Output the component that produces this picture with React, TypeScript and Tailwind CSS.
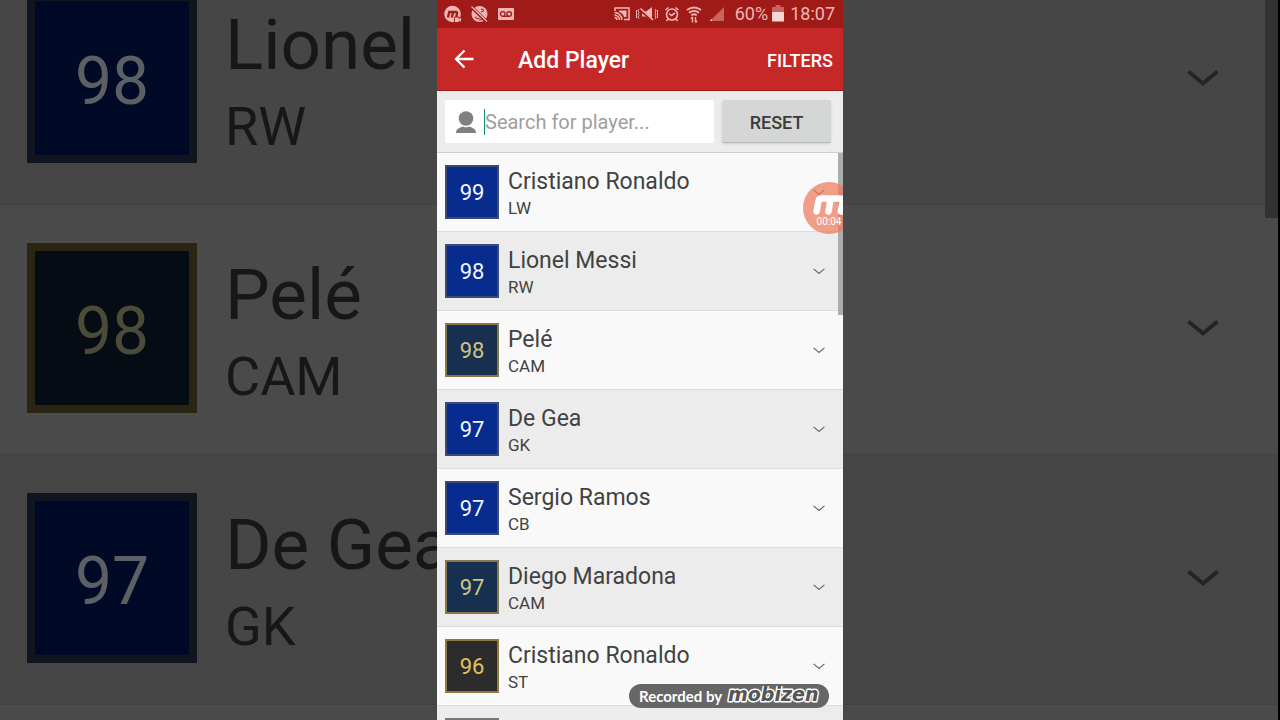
import clsx from "clsx";

type Tier = "blue" | "navy" | "black";

type Player = {
  id: number;
  name: string;
  position: string;
  rating: number;
  tier: Tier;
};

const PLAYERS: Player[] = [
  { id: 1, name: "Cristiano Ronaldo", position: "LW", rating: 99, tier: "blue" },
  { id: 2, name: "Lionel Messi", position: "RW", rating: 98, tier: "blue" },
  { id: 3, name: "Pelé", position: "CAM", rating: 98, tier: "navy" },
  { id: 4, name: "De Gea", position: "GK", rating: 97, tier: "blue" },
  { id: 5, name: "Sergio Ramos", position: "CB", rating: 97, tier: "blue" },
  { id: 6, name: "Diego Maradona", position: "CAM", rating: 97, tier: "navy" },
  { id: 7, name: "Cristiano Ronaldo", position: "ST", rating: 96, tier: "black" },
];

const TIER_STYLES: Record<Tier, string> = {
  blue: "bg-[#082c8e] border-[#3d4a75] text-[#f0f4ff]",
  navy: "bg-[#17304f] border-[#85794a] text-[#cfc489]",
  black: "bg-[#2c2c2c] border-[#8f7a3c] text-[#e0c15c]",
};

const DIM_TIER_STYLES: Record<Tier, string> = {
  blue: "bg-[#000a26] border-[#11151f] text-[#5c6065]",
  navy: "bg-[#050c14] border-[#2a2412] text-[#4c4a38]",
  black: "bg-[#0a0a0a] border-[#2a2412] text-[#4c4a38]",
};

function Chevron({ className }: { className: string }) {
  return (
    <svg viewBox="0 0 32 18" fill="none" stroke="currentColor" className={className}>
      <path d="M1.500 2.500 16 14.500 30.500 2.500" />
    </svg>
  );
}

function Backdrop() {
  return (
    <div aria-hidden="true" className="absolute inset-0 overflow-hidden bg-black pr-0.5">
      <div className="relative -mt-[45px]">
        {PLAYERS.slice(1, 4).map((p, i) => (
          <div
            key={p.id}
            className={clsx(
              "flex h-[250px] items-center border-b border-[#424242] pr-[59px] pb-1 pl-[27px]",
              i % 2 === 0 ? "bg-[#464646]" : "bg-[#4a4a4a]",
            )}
          >
            <div className={clsx("flex size-[170px] shrink-0 items-center justify-center border-8 pt-2 text-[66px]", DIM_TIER_STYLES[p.tier])}>
              {p.rating}
            </div>
            <div className="ml-7 w-[212px] overflow-hidden pt-2.5 whitespace-nowrap text-[#171717]">
              <p className="text-[71px] leading-[88px]">{p.name}</p>
              <p className="text-[54px] leading-[76px]">{p.position}</p>
            </div>
            <Chevron className="ml-auto w-8 stroke-4 text-[#242424]" />
          </div>
        ))}
        <div className="h-[250px] bg-[#4a4a4a]" />
        <div className="absolute top-0 right-0 h-[263px] w-[13px] bg-[#323232]" />
      </div>
    </div>
  );
}

function StatusBar() {
  return (
    <div className="flex h-7 items-center bg-[#a01a18] pr-2 pl-[7px] text-[#efb5b3]">
      <div className="flex flex-1 items-center gap-2">
        {/* Recorder */}
        <svg viewBox="0 0 18 18" className="size-[18px]">
          <circle cx="8.500" cy="9" r="8.300" fill="currentColor" />
          <path d="m4 12.500 1.200-5.500h6.800q1.500 0 1 1.500l-.8 3.500M7.800 12.500l1.200-5" fill="none" stroke="#a01a18" strokeWidth="2.300" />
          <path d="M10.500 12h4.500v1.500l2.500-1.500v5.500L15 16v1.500h-4.500z" fill="currentColor" stroke="#a01a18" strokeWidth=".9" />
        </svg>
        {/* Call blocked */}
        <svg viewBox="0 0 18 18" className="size-[18px]">
          <circle cx="9.500" cy="9" r="8" fill="currentColor" />
          <path d="M11 4q3 0 2.500 2l-2.500 1M6 11.500q-1 2 1 2.500l2.500-1M9 15q3 .5 5-2.500" fill="none" stroke="#a01a18" strokeWidth="1" />
          <path d="M2 3.500 16 17" stroke="#a01a18" strokeWidth="1.800" />
          <path d="M1.500 1.500 17 16.500" stroke="currentColor" strokeWidth="1.200" />
          <path d="M3 1.500 17.500 15.500" stroke="#a01a18" strokeWidth=".8" />
        </svg>
        {/* Voicemail */}
        <svg viewBox="0 0 18 18" className="ml-px size-[18px]">
          <rect x="1" y="3" width="16" height="12" rx="1" fill="currentColor" />
          <g fill="none" stroke="#a01a18" strokeWidth="1.300">
            <circle cx="5.800" cy="9" r="2.300" />
            <circle cx="12.200" cy="9" r="2.300" />
            <path d="M5.800 11.300h6.400" />
          </g>
        </svg>
      </div>
      <div className="flex items-center gap-1">
        {/* Cast */}
        <svg viewBox="0 0 18 18" fill="none" stroke="currentColor" strokeWidth="1.500" className="size-[18px]">
          <path d="M2 6V3h14v11.500h-5" />
          <path d="M6 5.500h7.500V12h-2.500q-1-4-5-5z" fill="currentColor" stroke="none" />
          <path d="M1.500 7.500a7.500 7.500 0 0 1 7.500 7.500M1.500 10a5 5 0 0 1 5 5M1.500 12.500A2.500 2.500 0 0 1 4 15" />
        </svg>
        {/* Vibrate, sound off */}
        <svg viewBox="0 0 24 18" className="h-[18px] w-6">
          <path d="M7 6.500h4L17 2v14l-6-4.500H7z" fill="currentColor" />
          <path d="m5.500 5 12 10.500" stroke="#a01a18" strokeWidth="2.800" />
          <path d="M5.500 3.500 18 15" stroke="currentColor" strokeWidth="1.600" />
          <path d="m4 4-1 1.700 1 1.600-1 1.700 1 1.700-1 1.600L4 14M1.500 5v8M20 4l1 1.700-1 1.600 1 1.700-1 1.700 1 1.600L20 14M22.500 5v8" fill="none" stroke="currentColor" strokeWidth="1" />
        </svg>
        {/* Alarm */}
        <svg viewBox="0 0 18 18" fill="none" stroke="currentColor" strokeWidth="1.600" className="size-[18px]">
          <circle cx="9" cy="9.500" r="5.500" />
          <path d="M2.500 5 5.500 2.500M15.500 5l-3-2.500M5 14l-1.500 2M13 14l1.500 2M6 8.500l2.500 2 3.500-2.500" />
        </svg>
        {/* Wi-Fi */}
        <svg viewBox="0 0 18 18" fill="none" stroke="currentColor" strokeWidth="1.900" className="size-[18px]">
          <path d="M2 5q7-5 14 0M4 7.700q5-3.700 10 0M6.300 10.300q2.700-2 5.400 0" />
          <path d="M7.500 17.500V12M6 13.700 7.500 12M10.500 12v5.500M12 15.800l-1.500 1.700" strokeWidth="1.400" />
        </svg>
        {/* Signal */}
        <svg viewBox="0 0 18 18" className="size-[18px]">
          <path d="M17 2v14H3z" fill="#c66461" />
          <path d="M5 13.500V16H2.500z" fill="currentColor" />
        </svg>
        <span className="ml-1.5 text-lg">60%</span>
        {/* Battery */}
        <svg viewBox="0 0 12 18" className="h-[18px] w-3">
          <path d="M3.500 0h5v2H12v6H0V2h3.500z" fill="#c66461" />
          <path d="M0 7h12v9.500H0z" fill="#f7d6d4" />
        </svg>
        <span className="ml-0.5 text-lg">18:07</span>
      </div>
    </div>
  );
}

function AppBar() {
  return (
    <header className="flex h-[63px] items-center border-b border-[#a31c1a] bg-[#c62828] pt-1 pr-2.5 pl-[17px] font-medium text-white">
      <button type="button" aria-label="Back" className="flex w-16 pb-1">
        <svg viewBox="0 0 20 20" fill="none" stroke="currentColor" strokeWidth="2.300" className="size-5">
          <path d="M19.500 10H2.500M10.500 1.500 2 10l8.500 8.500" />
        </svg>
      </button>
      <h1 className="flex-1 text-[23px]">Add Player</h1>
      <button type="button" className="text-lg">FILTERS</button>
    </header>
  );
}

function SearchBar() {
  return (
    <form className="flex h-[62px] items-center gap-2 border-b border-[#cfcfcf] bg-[#ececec] pr-3 pl-2">
      <label className="flex h-[43px] flex-1 items-center rounded-xs bg-white pl-[11px]">
        <svg viewBox="0 0 20 22" fill="#808080" role="img" aria-label="Player" className="mr-2 h-[22px] w-5">
          <circle cx="10" cy="7.500" r="7.300" />
          <path d="M0 22c0-4 3-5 7-6.500 1 1 5 1 6 0 4 1.500 7 2.500 7 6.500z" />
        </svg>
        <input
          type="text"
          placeholder="Search for player..."
          className="h-[26px] w-0 flex-1 border-l border-[#12907f] text-[20px] outline-none placeholder:text-[#9e9e9e]"
        />
      </label>
      <button type="button" className="h-[43px] w-[109px] rounded-xs border-b border-[#b9bbba] bg-[#d5d7d6] pt-1 text-lg font-medium text-[#3b3b3b] shadow-sm">
        RESET
      </button>
    </form>
  );
}

function PlayerRow({ player, shaded }: { player: Player; shaded: boolean }) {
  return (
    <li className={clsx("flex h-[79px] items-center gap-[9px] border-b border-[#dcdcdc] pr-3.5 pl-2", shaded ? "bg-[#ececec]" : "bg-[#f9f9f9]")}>
      <div className={clsx("flex size-[54px] shrink-0 items-center justify-center border-2 pt-px text-[22px]", TIER_STYLES[player.tier])}>
        {player.rating}
      </div>
      <div className="flex-1 pt-1 text-[#424242]">
        <p className="text-[23px] leading-7">{player.name}</p>
        <p className="text-[17px] leading-6">{player.position}</p>
      </div>
      <button type="button" aria-label={`Show ${player.name}`} className="p-1">
        <Chevron className="w-3 stroke-3 text-[#606060]" />
      </button>
    </li>
  );
}

function RecorderBubble() {
  return (
    <div className="absolute top-[29px] left-[366px] flex size-[52px] flex-col items-center rounded-full bg-[#ee7858]/70 pt-3 text-white">
      <svg viewBox="0 0 36 22" role="img" aria-label="Mobizen" className="h-[22px] w-9">
        <g fill="none" stroke="#fff" strokeWidth="6.500" strokeLinecap="round" strokeLinejoin="round">
          <path d="m5.500 17.500 2-10.500q.5-2.500 3-2.500H29q3.500 0 2.800 3l-2 10" />
          <path d="m17.500 17.500 2-12" />
        </g>
      </svg>
      <span className="text-[10px] leading-3">00:04</span>
    </div>
  );
}

function Watermark() {
  return (
    <div className="absolute right-3.5 bottom-3 flex h-6 w-[200px] items-center justify-between rounded-full bg-[#666] pr-1.5 pl-2.5">
      <span className="font-['Lato',sans-serif] text-[15px] font-bold whitespace-nowrap text-white">Recorded by</span>
      <svg viewBox="0 0 98 20" role="img" aria-label="Mobizen" className="h-5 w-[98px]">
        <text
          x="3"
          y="15"
          fontFamily="DejaVu Sans"
          fontSize="19"
          fontWeight="bold"
          fontStyle="italic"
          fill="#555"
          stroke="#fff"
          strokeWidth="3"
          strokeLinejoin="round"
          paintOrder="stroke"
        >
          mobizen
        </text>
      </svg>
    </div>
  );
}

export default function App() {
  return (
    <div className="relative flex h-screen justify-center overflow-hidden font-['Roboto',sans-serif]">
      <Backdrop />
      <main className="relative flex w-[406px] flex-col overflow-hidden bg-[#ececec]">
        <StatusBar />
        <AppBar />
        <SearchBar />
        <div className="relative flex-1 overflow-hidden">
          <ul>
            {PLAYERS.map((p, i) => (
              <PlayerRow key={p.id} player={p} shaded={i % 2 === 1} />
            ))}
          </ul>
          {/* Top edge of the next rating badge */}
          <div className="mt-3 ml-2 h-[54px] w-[54px] border-2 border-[#77777a] bg-[#444]" />
          <div className="absolute top-0 right-0 h-[162px] w-[5px] bg-[#adadad]" />
          <RecorderBubble />
        </div>
        <Watermark />
      </main>
    </div>
  );
}
